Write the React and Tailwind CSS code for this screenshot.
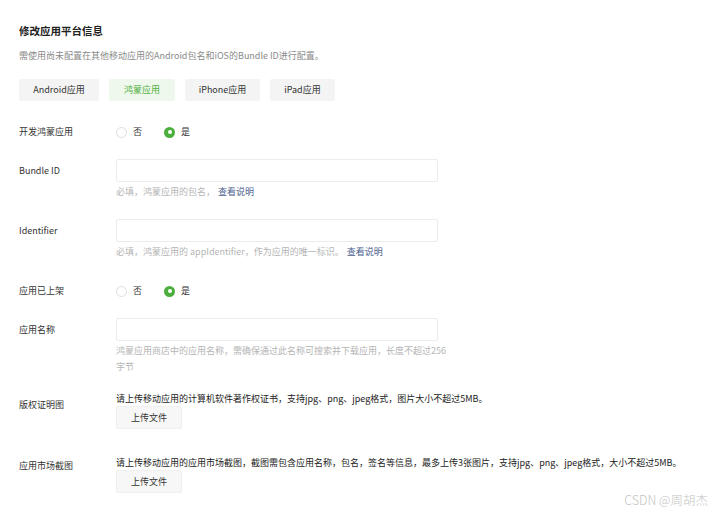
import { useState } from "react";

const font = { fontFamily: '"Noto Sans CJK SC", "Noto Sans", sans-serif' };

function Radio({ checked, label }) {
  return (
    <label className="flex items-center gap-[6px] cursor-pointer">
      {checked ? (
        <span className="w-[11px] h-[11px] rounded-full bg-[#4bae3d] flex items-center justify-center">
          <span className="w-[4px] h-[4px] rounded-full bg-white"></span>
        </span>
      ) : (
        <span className="w-[11px] h-[11px] rounded-full border border-[#dedede] bg-white"></span>
      )}
      <span className="text-[9px] text-[#333]">{label}</span>
    </label>
  );
}

function RadioRow({ label, value, setValue, className }) {
  return (
    <div className={"flex items-center h-[14px] " + className}>
      <div className="w-[97px] text-[9px] text-[#333]">{label}</div>
      <div className="flex items-center gap-[22px]">
        <div onClick={() => setValue(false)}><Radio checked={!value} label="否" /></div>
        <div onClick={() => setValue(true)}><Radio checked={value} label="是" /></div>
      </div>
    </div>
  );
}

function InputRow({ label, className, children }) {
  return (
    <div className={"flex items-start " + className}>
      <div className="w-[97px] h-[23px] flex items-center text-[9px] text-[#333]">{label}</div>
      <div className="flex flex-col">
        <input className="w-[322px] h-[23px] border border-[#ececec] rounded-[2px] outline-none px-2 text-[9px]" />
        {children}
      </div>
    </div>
  );
}

function UploadRow({ label, desc, labelMt, className }) {
  return (
    <div className={"flex items-start " + className}>
      <div className={"w-[97px] text-[9px] leading-[12px] text-[#333] " + labelMt}>{label}</div>
      <div className="flex flex-col items-start">
        <div className="text-[9px] leading-[12px] text-[#222] whitespace-nowrap">{desc}</div>
        <button className="mt-[1px] w-[66px] h-[23px] bg-[#f7f7f7] border border-[#efefef] rounded-[2px] text-[9px] text-[#333]">
          上传文件
        </button>
      </div>
    </div>
  );
}

export default function App() {
  const [tab, setTab] = useState("harmony");
  const [isHarmony, setIsHarmony] = useState(true);
  const [listed, setListed] = useState(true);

  const tabs = [
    { id: "android", name: "Android应用", w: "w-[80px]" },
    { id: "harmony", name: "鸿蒙应用", w: "w-[66px]" },
    { id: "iphone", name: "iPhone应用", w: "w-[75px]" },
    { id: "ipad", name: "iPad应用", w: "w-[65px]" },
  ];

  return (
    <div className="relative min-h-screen w-[715px] h-[516px] bg-white overflow-hidden pl-[19px] pt-[24px]" style={font}>
      <h1 className="text-[10.5px] leading-[14px] font-bold text-[#222]">修改应用平台信息</h1>
      <p className="mt-[12px] text-[9px] leading-[12px] text-[#8a8a8a]">
        需使用尚未配置在其他移动应用的Android包名和iOS的Bundle ID进行配置。
      </p>

      <div className="mt-[17px] flex gap-[10px]">
        {tabs.map((t) => (
          <button
            key={t.id}
            onClick={() => setTab(t.id)}
            className={
              t.w +
              " h-[22px] rounded-[2px] text-[9px] " +
              (tab === t.id ? "bg-[#eff8ec] text-[#4fb043]" : "bg-[#f4f4f4] text-[#333]")
            }
          >
            {t.name}
          </button>
        ))}
      </div>

      <RadioRow label="开发鸿蒙应用" value={isHarmony} setValue={setIsHarmony} className="mt-[24px]" />

      <InputRow label="Bundle ID" className="mt-[20px]">
        <p className="mt-[4px] text-[9px] leading-[12px] text-[#b5b5b5]">
          必填，鸿蒙应用的包名，
          <a className="ml-[3px] text-[#4d5f8f] cursor-pointer">查看说明</a>
        </p>
      </InputRow>

      <InputRow label="Identifier" className="mt-[21px]">
        <p className="mt-[4px] text-[9px] leading-[12px] text-[#b5b5b5]">
          必填，鸿蒙应用的 appIdentifier，作为应用的唯一标识。
          <a className="ml-[3px] text-[#4d5f8f] cursor-pointer">查看说明</a>
        </p>
      </InputRow>

      <RadioRow label="应用已上架" value={listed} setValue={setListed} className="mt-[26px]" />

      <InputRow label="应用名称" className="mt-[20px]">
        <p className="mt-[2px] text-[9px] leading-[16px] text-[#b5b5b5] whitespace-nowrap">
          鸿蒙应用商店中的应用名称，需确保通过此名称可搜索并下载应用，长度不超过256
          <br />
          字节
        </p>
      </InputRow>

      <UploadRow
        label="版权证明图"
        labelMt="mt-[6px]"
        className="mt-[18px]"
        desc="请上传移动应用的计算机软件著作权证书，支持jpg、png、jpeg格式，图片大小不超过5MB。"
      />

      <UploadRow
        label="应用市场截图"
        labelMt="mt-[3px]"
        className="mt-[28px]"
        desc="请上传移动应用的应用市场截图，截图需包含应用名称，包名，签名等信息，最多上传3张图片，支持jpg、png、jpeg格式，大小不超过5MB。"
      />

      <div className="absolute right-[7px] bottom-[6px] text-[12.5px] text-[#c4c4c4] font-light">CSDN @周胡杰</div>
    </div>
  );
}
